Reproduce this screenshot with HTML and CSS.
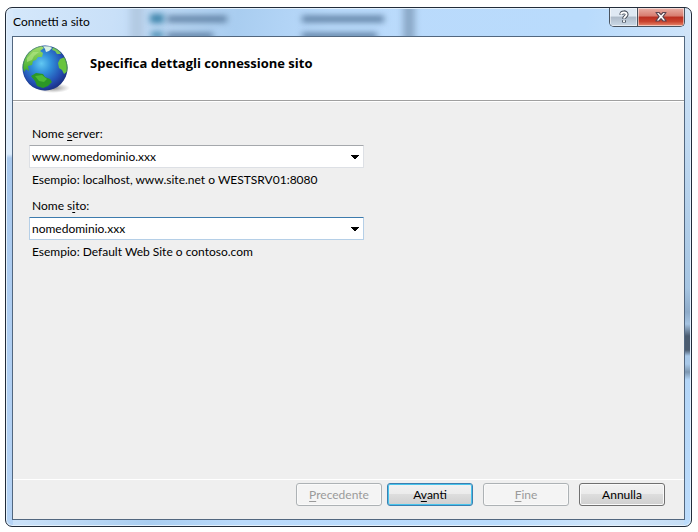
FILE: index.html
```html
<!DOCTYPE html>
<html lang="it">
<head>
<meta charset="utf-8">
<title>Connetti a sito</title>
<link rel="stylesheet" href="styles.css">
</head>
<body>
<main class="window">
  <div class="backdrop" aria-hidden="true">
    <i class="shade shade-left"></i>
    <i class="shade shade-right"></i>
    <i class="blob blob-globe"></i>
    <i class="blob blob-name"></i>
    <i class="blob blob-url"></i>
    <i class="blob blob-low-globe"></i>
    <i class="blob blob-low-name"></i>
    <i class="blob blob-low-url"></i>
  </div>
  <header class="titlebar">
    <span class="caption">Connetti a sito</span>
    <div class="controls">
      <button class="control help" type="button" aria-label="Guida">
        <svg width="12" height="14" viewBox="0 0 12 14"><path d="M3.3 4.7C3.3 1.5 8.7 1.5 8.7 4.5C8.7 6.5 6 6.4 6 8.7M6 10.3V12.4" fill="none" stroke="#454d59" stroke-width="3.8"/><path d="M3 4.5C3.4 1.8 8.6 1.8 8.6 4.5C8.6 6.4 6 6.4 6 8.5M6 10.2V12" fill="none" stroke="#fff" stroke-width="1.9"/></svg>
      </button>
      <button class="control close" type="button" aria-label="Chiudi">
        <svg width="14" height="12" viewBox="0 0 14 12"><path d="M2 1.5H5L7 3.7L9 1.5H12L8.9 5.7L12.2 10H9L7 7.7L5 10H1.8L5.1 5.7Z" fill="#fff" stroke="#5c4550" stroke-width="1.2" stroke-linejoin="round"/></svg>
      </button>
    </div>
  </header>
  <form class="client">
    <div class="banner">
      <svg class="globe" width="50" height="50" viewBox="0 0 50 50" aria-hidden="true">
        <defs>
          <radialGradient id="sea" cx=".42" cy=".4" r=".62"><stop offset="0" stop-color="#62c8f2"/><stop offset=".35" stop-color="#3190da"/><stop offset=".75" stop-color="#2450b4"/><stop offset="1" stop-color="#1b2f86"/></radialGradient>
          <linearGradient id="land" x1="0" y1="0" x2="0" y2="1"><stop offset="0" stop-color="#a6e070"/><stop offset="1" stop-color="#3cab2b"/></linearGradient>
          <radialGradient id="shadow"><stop offset="0" stop-color="#555" stop-opacity=".75"/><stop offset="1" stop-color="#888" stop-opacity="0"/></radialGradient>
          <clipPath id="disc"><circle cx="23" cy="24" r="22.5"/></clipPath>
        </defs>
        <ellipse cx="31" cy="44" rx="17" ry="5" fill="url(#shadow)"/>
        <circle cx="23" cy="24" r="22.5" fill="url(#sea)"/>
        <g clip-path="url(#disc)">
          <path d="M9 5L19 1L22 4L18 7L21 9L20 13L16 13L14 16L11 17L10 21L6 22L7 27L4 25L2 28L0 21L2 13Z" fill="url(#land)"/>
          <path d="M21 2L28 1L30 4L27 7L24 8L23 5Z" fill="#d9f2e4"/>
          <path d="M31 3L37 5L39 10L35 10L33 7L30 6Z" fill="#78c85a"/>
          <path d="M38 15L43 13L47 20L46 27L42 30L40 26L37 24L36 19Z" fill="#69c43f"/>
          <path d="M9 32L14 29L21 30L23 33L28 35L30 38L26 42L21 44L15 42L13 37Z" fill="#2b9727"/>
          <path d="M13 32L20 31L25 35L22 38L17 37Z" fill="#4dba35"/>
          <path d="M5 14L11 8L17 8L12 12L10 16L5 18Z" fill="#b8e888" opacity=".6"/>
        </g>
        <circle cx="23" cy="24" r="22" fill="none" stroke="#1c3b7c" stroke-opacity=".4"/>
      </svg>
      <h1 class="heading">Specifica dettagli connessione sito</h1>
    </div>
    <div class="fields">
      <div class="field">
        <label for="server">Nome <u>s</u>erver:</label>
        <select id="server" class="combo"><option>www.nomedominio.xxx</option></select>
        <p class="hint">Esempio: localhost, www.site.net o WESTSRV01:8080</p>
      </div>
      <div class="field">
        <label for="site">Nome s<u>i</u>to:</label>
        <select id="site" class="combo active"><option>nomedominio.xxx</option></select>
        <p class="hint">Esempio: Default Web Site o contoso.com</p>
      </div>
    </div>
    <footer class="actions">
      <div class="steps">
        <button class="button" type="button" disabled><u>P</u>recedente</button>
        <button class="button primary" type="button">A<u>v</u>anti</button>
      </div>
      <button class="button" type="button" disabled><u>F</u>ine</button>
      <button class="button" type="button">Annulla</button>
    </footer>
  </form>
</main>
</body>
</html>
```
FILE: styles.css
```css
* { box-sizing: border-box; }
body {
  margin: 0;
  min-height: 100vh;
  padding: 7px 6px 5px 5px;
  display: flex;
  background: #fff;
  color: #000;
  font: 12px/20px Lato, "Open Sans", sans-serif;
}
button, select { font: inherit; color: inherit; }
u { text-underline-offset: 2px; text-decoration-skip-ink: none; }

.window {
  position: relative;
  flex: 1;
  display: flex;
  flex-direction: column;
  padding: 0 6px 6px;
  border: 1px solid #222c3a;
  border-radius: 7px;
  box-shadow: inset 0 0 0 1px #e4f1fc;
  background:
    linear-gradient(#d8e9fb 0, #dcecfc 146px, #a9c9ee 150px, #b5d3f5 100%) 0 0 / 7px 100% no-repeat,
    linear-gradient(#d3e5f8 0, #c1daf2 130px, #a6c5e2 280px, #8eabc9 304px, #a6c4e2 316px, #4b5c70 328px, #4b5c70 342px, #a9c9e9 348px, #a9c9e9 356px, #7c96b0 364px, #b4d6f8 372px, #bcdcfc 100%) 100% 0 / 7px 100% no-repeat,
    linear-gradient(100deg, #d5e8fb 0, #c9e0f8 14%, #a9cdf0 30%, #badafb 42%, #b9dbfc 75%, #d0e5fa 90%, #c4dcf4 100%);
}

/* Blurred desktop seen through the glass of the caption */
.backdrop { position: absolute; inset: 1px 1px auto; height: 27px; overflow: hidden; border-radius: 5px 5px 0 0; }
.shade, .blob { position: absolute; }
.shade { top: -8px; bottom: -8px; filter: blur(3px); }
.shade-left { left: 18%; width: 14px; background: #b3cae3; }
.shade-right { left: 58%; width: 12px; background: #8caac9; }
.blob { height: 6px; filter: blur(3px); background: #56789b; }
.blob-globe { left: 143px; top: 5px; width: 14px; height: 9px; background: #3a82a8; }
.blob-name { left: 160px; top: 7px; width: 60px; }
.blob-url { left: 295px; top: 7px; width: 82px; }
.blob-low-globe { left: 144px; top: 23px; width: 12px; background: #3a82a8; }
.blob-low-name { left: 160px; top: 24px; width: 46px; }
.blob-low-url { left: 295px; top: 24px; width: 75px; }

.titlebar { position: relative; display: flex; justify-content: space-between; height: 28px; }
.caption { padding: 4px 1px; }
.controls { display: flex; align-self: flex-start; border: 1px solid #49535f; border-top: 0; border-radius: 0 0 5px 5px; overflow: hidden; }
.control {
  display: grid;
  place-items: center;
  height: 18px;
  padding: 0;
  border: 0;
  box-shadow: inset 0 0 0 1px #ffffff88;
}
.help { width: 27px; background: linear-gradient(#dfe9f3 0 45%, #adbac8 50%, #ccdae8); }
.close { width: 47px; border-left: 1px solid #49535f; background: linear-gradient(#e9b0a6 0, #d77b6e 45%, #b92e20 50%, #c9432e 75%, #e88b70); }

.client { position: relative; flex: 1; display: flex; flex-direction: column; border: 1px solid #52677f; background: #efefef; }
.banner { display: flex; align-items: center; height: 64px; padding: 0 9px; gap: 18px; border-bottom: 1px solid #a0a0a0; background: #fff; }
.heading { margin: 0 0 12px; font: 700 13px/20px "Open Sans", "Noto Sans", sans-serif; }

.fields { flex: 1; padding: 22px 16px; border-top: 1px solid #fff; }
.field { width: 335px; max-width: 100%; margin-bottom: 6px; }
.field label { display: block; margin-bottom: 1px; padding-left: 3px; }
.combo {
  appearance: none;
  display: block;
  width: 100%;
  height: 23px;
  margin-bottom: 2px;
  padding: 0 20px 0 2px;
  border: 1px solid #dde0e5;
  border-top-color: #a5a8ac;
  border-radius: 1px;
  line-height: 20px;
  background: conic-gradient(from -45deg at 4px 4px, #000 90deg, transparent 0) right 4px top 9px / 8px 4px no-repeat, #fff;
}
.combo.active { border-color: #b5cfe7; border-top-color: #3d7bad; }
.hint { margin: 0; padding-left: 3px; white-space: nowrap; }

.actions { display: flex; justify-content: flex-end; gap: 10px; padding: 3px 19px 13px; border-top: 1px solid #fff; }
.steps { display: flex; gap: 5px; }
.button {
  width: 86px;
  height: 23px;
  padding: 0;
  border: 1px solid #707070;
  border-radius: 3px;
  line-height: 20px;
  background: linear-gradient(#f2f2f2, #ebebeb 48%, #dddddd 50%, #cfcfcf);
  box-shadow: inset 0 0 0 1px #fafafa;
}
.button:disabled { color: #9a9a9a; border-color: #adb2b5; background: #f4f4f4; }
.primary { border-color: #3c7fb1; box-shadow: inset 0 0 0 1px #48c4ec; }
```
